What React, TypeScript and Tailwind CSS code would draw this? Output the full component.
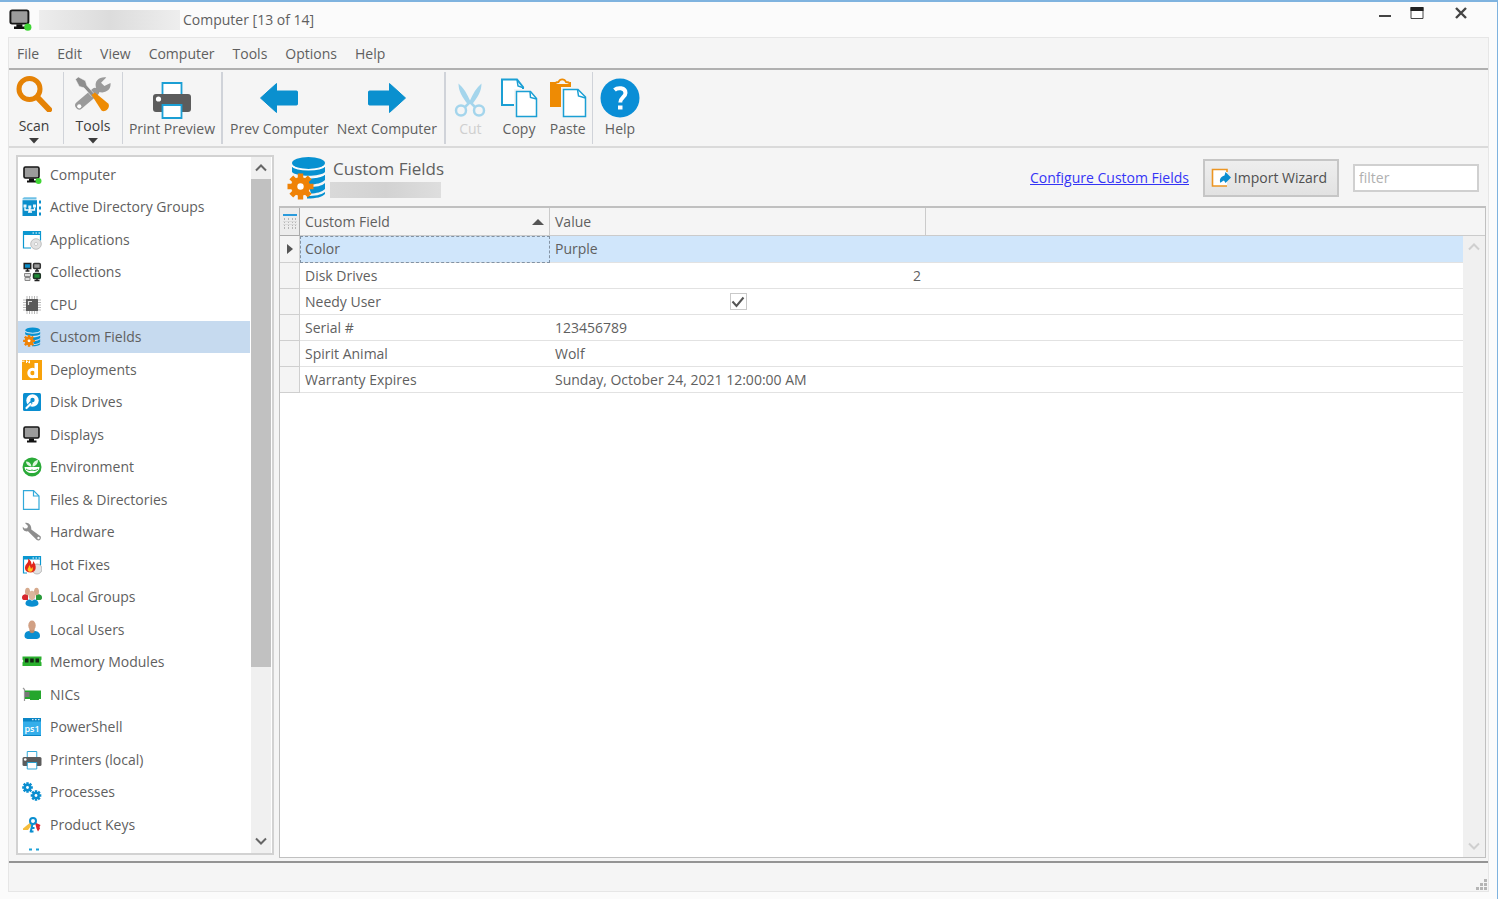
import React from 'react';

type IconProps = { className?: string };

const MonitorIcon = ({ className, online }: IconProps & { online?: boolean }) => (
  <svg viewBox="0 0 20 20" className={className} aria-hidden="true">
    <rect x="2" y="2" width="15" height="11" rx="1.5" fill="#9c9c9c" stroke="#161616" strokeWidth="1.6" />
    <path d="M7 13.5h5v2h2.5v2H5v-2h2z" fill="#111" />
    {online && <circle cx="16.5" cy="16" r="3" fill="#3fd534" />}
  </svg>
);

const DirectoryIcon = ({ className }: IconProps) => (
  <svg viewBox="0 0 20 20" className={className} aria-hidden="true">
    <path d="M.5 2.500V1.500L2 .3h12.500v2.200z" fill="#6fc1e6" />
    <rect x=".5" y="3.200" width="14.500" height="15.800" fill="#0a8ecb" />
    <path d="M1.500 7.500h3v3h-3zM6.300 8.500h3v3h-3zM11 7.500h3v3h-3z" fill="#e8f6fc" />
    <path d="M3 10.500v2.500h9.500v-2.500M7.800 11v4M6 15h4" fill="none" stroke="#fff" strokeWidth="1.300" />
    <path d="M17 3.500h2v3h-2zM17 9.500h2v3h-2zM17 15.500h2v3h-2z" fill="#0a8ecb" />
  </svg>
);

const ApplicationIcon = ({ className }: IconProps) => (
  <svg viewBox="0 0 20 20" className={className} aria-hidden="true">
    <path d="M1.500 1.500h17v9M1.500 1.500V18H9" fill="none" stroke="#0a97d0" strokeWidth="1.200" />
    <path d="M1 1h18v4H1z" fill="#0a97d0" />
    <path d="M10.500 3h1.500M13.500 3H15M16.500 3H18" stroke="#fff" strokeWidth="1" />
    <circle cx="14" cy="14" r="5.300" fill="#e2e2e2" stroke="#b3b3b3" strokeWidth=".8" />
    <circle cx="14" cy="14" r="1.600" fill="#fff" stroke="#bdbdbd" strokeWidth=".7" />
  </svg>
);

const CollectionsIcon = ({ className }: IconProps) => (
  <svg viewBox="0 0 20 20" className={className} aria-hidden="true">
    <rect x="2.200" y="1.500" width="6.500" height="5" fill="#0a8ecb" stroke="#222" strokeWidth="1.500" />
    <rect x="11.500" y="1.500" width="6.800" height="5" rx="1" fill="#999" stroke="#333" strokeWidth="1.500" />
    <path d="M3.500 9h4M5.500 7v2M13 9h4M15 7v2" stroke="#222" strokeWidth="1.600" />
    <path d="M2.500 11.500h6v3h-6zM3 15.500h5v3H3z" fill="#ddd" stroke="#888" />
    <rect x="11.500" y="11.500" width="6.800" height="5" rx="1" fill="#1e8a35" stroke="#1f3325" strokeWidth="1.500" />
    <path d="M12.500 18.500h5M15 16.500v2" stroke="#222" strokeWidth="1.500" />
  </svg>
);

const CpuIcon = ({ className }: IconProps) => (
  <svg viewBox="0 0 20 20" className={className} aria-hidden="true">
    <path d="M5 1v18M7.500 1v18M10 1v18M12.500 1v18M15 1v18M1 5h18M1 7.500h18M1 10h18M1 12.500h18M1 15h18" stroke="#b0b0b0" strokeWidth=".9" />
    <rect x="4" y="4" width="12" height="12" rx=".5" fill="#5a5a5a" />
    <path d="M6.500 10V6.500H10" fill="none" stroke="#ddd" strokeWidth="1.200" />
  </svg>
);

const DatabaseGearIcon = ({ className }: IconProps) => (
  <svg viewBox="0 0 40 44" className={className} aria-hidden="true">
    <ellipse cx="21.500" cy="7" rx="16.500" ry="6" fill="#0791d1" />
    <path d="M5 10c5 5 28 5 33 0v6c-5 5-28 5-33 0z" fill="#0791d1" />
    <path d="M12 21c9 2 21 1 26-3v6c-3 3-9 4.500-15 4.500zM22 31c7 0 13-1 16-4v6c-3 3-9 4.500-14 4.500zM20 40c8 0 14-1 18-4v2c-3 3-8 4.500-18 4.500z" fill="#0791d1" />
    <path d="M5 10c5 5 28 5 33 0" fill="none" stroke="#fff" strokeWidth="1.500" />
    <path d="M38 18c-5 4-17 5-26 3" fill="none" stroke="#fff" strokeWidth="1.200" />
    <g transform="translate(13.500 30.500)" fill="#ef8206">
      <circle r="9.500" />
      <path d="M-2.700-13h5.400v26h-5.400zM-13-2.700h26v5.400h-26z" />
      <path d="M-2.700-13h5.400v26h-5.400zM-13-2.700h26v5.400h-26z" transform="rotate(45)" />
      <circle r="3.200" fill="#fff" />
    </g>
  </svg>
);

const DeployIcon = ({ className }: IconProps) => (
  <svg viewBox="0 0 20 20" className={className} aria-hidden="true">
    <path d="M0 0h20v20H0z" fill="#f8a20a" />
    <path d="M0 1.200h2.500M4.500 3V.500M4.500.500L7.500 3V.500" stroke="#fff" strokeWidth="1" fill="none" />
    <circle cx="10.500" cy="13" r="3.700" fill="none" stroke="#fff" strokeWidth="3" />
    <path d="M12.500 3H16v15h-3.500z" fill="#fff" />
  </svg>
);

const DiskIcon = ({ className }: IconProps) => (
  <svg viewBox="0 0 20 20" className={className} aria-hidden="true">
    <rect x="1" y="1" width="18" height="18" rx="1.500" fill="#0a8ed0" />
    <circle cx="10.500" cy="8.500" r="6.200" fill="#fff" />
    <circle cx="10.500" cy="8" r="2.200" fill="#0a8ed0" />
    <path d="M9.500 10L5 15.500" stroke="#0a8ed0" strokeWidth="3" />
    <path d="M8.500 12l-4 4" stroke="#fff" strokeWidth="2.200" strokeLinecap="round" />
  </svg>
);

const EnvironmentIcon = ({ className }: IconProps) => (
  <svg viewBox="0 0 20 20" className={className} aria-hidden="true">
    <circle cx="10" cy="10" r="9.500" fill="#2aaa38" />
    <path d="M2.500 10h15c-.5 4-3.500 6-7.500 6s-7-2-7.500-6z" fill="#fff" />
    <path d="M9.500 9.500C5 9 4 6 4 4.500 7 4.500 9 6 9.500 9.500zM10.500 9.500C10.500 6 12.500 3.500 16 3c0 3-1.500 6-5.500 6.500z" fill="#dff5df" />
    <path d="M4 12c2 1.500 4 2 6 1 2 1 4 .5 6-1" stroke="#2aaa38" fill="none" strokeWidth="1" />
  </svg>
);

const FileIcon = ({ className }: IconProps) => (
  <svg viewBox="0 0 20 20" className={className} aria-hidden="true">
    <path d="M1.500.600h10L17 6v13.400H1.500z" fill="#fff" stroke="#31a9da" strokeWidth="1.200" />
    <path d="M11.500.600V6H17" fill="none" stroke="#31a9da" strokeWidth="1.200" />
  </svg>
);

const WrenchIcon = ({ className }: IconProps) => (
  <svg viewBox="0 0 20 20" className={className} aria-hidden="true">
    <path d="M3 1l3 3-.8 2.300L2.500 6.500.800 4.800C.3 8 3 10 6 9.300l8.500 8.500c2.200 2 5.500-.5 4-3.500L9.300 7.500C9.800 3.500 6.500 0 3 1z" fill="#8e8e8e" />
    <circle cx="16.500" cy="16" r="1.200" fill="#fff" />
  </svg>
);

const HotFixIcon = ({ className }: IconProps) => (
  <svg viewBox="0 0 20 20" className={className} aria-hidden="true">
    <path d="M1.500 1.500h17v9M1.500 1.500V18H5" fill="none" stroke="#0a97d0" strokeWidth="1.200" />
    <path d="M1 1h18v3.500H1z" fill="#0a97d0" />
    <path d="M10.500 3h1.500M13.500 3H15M16.500 3H18" stroke="#fff" />
    <circle cx="15" cy="14" r="5" fill="#e2e2e2" stroke="#aaa" strokeWidth=".8" />
    <path d="M6 3.500c3 2 3.500 4 3.500 6C11 9 11 8 11 6c4 4 4 11.500-2.500 11.500C2 17.500 2 11.500 4.500 9 6.500 7 6.500 5.500 6 3.500z" fill="#e1251b" />
    <path d="M7 10c2 2 1.500 3 2 4l1.500-2c1 3-.5 4.700-2 4.700C6 16.700 5 14.500 6 13.200c.7-1 1-1.800 1-3.200z" fill="#ffc423" />
  </svg>
);

const GroupIcon = ({ className }: IconProps) => (
  <svg viewBox="0 0 20 20" className={className} aria-hidden="true">
    <path d="M0 10.500C0 7.500 3 7 6 7v6H1.500C.5 12.500 0 12 0 10.500z" fill="#d7262d" />
    <path d="M20 10.500C20 7.500 17 7 14 7v6h4.500c1-.5 1.500-1 1.500-2.500z" fill="#2a9a3a" />
    <ellipse cx="5.500" cy="4.500" rx="2.500" ry="3.800" fill="#d6a98c" />
    <ellipse cx="14.500" cy="4.500" rx="2.500" ry="3.800" fill="#d6a98c" />
    <ellipse cx="10" cy="8.500" rx="3.500" ry="4.700" fill="#dcb69d" />
    <path d="M3.500 17c0-3.300 2-4.300 4.500-4.500 1 1.500 3 1.500 4 0 2.500.2 4.500 1.200 4.500 4.500-1 3.500-12 3.500-13 0z" fill="#0a8ed0" />
  </svg>
);

const UserIcon = ({ className }: IconProps) => (
  <svg viewBox="0 0 20 20" className={className} aria-hidden="true">
    <path d="M2.500 16c0-4 2.500-5 5.500-5h4c3 0 6 1 6 5 0 1.500-1 2.500-3 3H5.500c-2-.5-3-1.500-3-3z" fill="#0a8ed0" />
    <path d="M7.500 9h5v3c-1.500 1.500-3.500 1.500-5 0z" fill="#bd8a6c" />
    <ellipse cx="10" cy="5.500" rx="3.700" ry="5" fill="#d1a084" />
  </svg>
);

const MemoryIcon = ({ className }: IconProps) => (
  <svg viewBox="0 0 20 20" className={className} aria-hidden="true">
    <path d="M.500 4.500h19v3l-1 1.500 1 1.500v3.500H.5v-3.500l1-1.500-1-1.500z" fill="#2bb02f" />
    <path d="M3 6.500h3.500v4H3zM8.200 6.500h3.500v4H8.200zM13.500 6.500H17v4h-3.500z" fill="#142614" />
  </svg>
);

const NicIcon = ({ className }: IconProps) => (
  <svg viewBox="0 0 20 20" className={className} aria-hidden="true">
    <path d="M1 3l1.500 1.500V16" fill="none" stroke="#999" strokeWidth="1.200" />
    <path d="M3 5.500h16v8.500h-2v1H8v-1H3z" fill="#25a62d" />
    <path d="M3 7h4.500v5H3z" fill="#777" />
  </svg>
);

const PowerShellIcon = ({ className }: IconProps) => (
  <svg viewBox="0 0 20 20" className={className} aria-hidden="true">
    <path d="M1 1h18v18H1z" fill="#35aeea" />
    <path d="M1 1h18v3.500H1z" fill="#0b86c6" />
    <path d="M10 2.700h1.500M13 2.700h1.500M16 2.700h1.500" stroke="#fff" />
    <text x="10" y="14.500" textAnchor="middle" fontSize="9" fontFamily="Open Sans" fontWeight="600" fill="#fff">ps1</text>
    <path d="M1 18h18v1H1z" fill="#0b86c6" />
  </svg>
);

const PrinterIcon = ({ className }: IconProps) => (
  <svg viewBox="0 0 40 38" className={className} aria-hidden="true">
    <path d="M10.500 2h19v13h-19z" fill="#fff" stroke="#1b9fd4" strokeWidth="1.800" />
    <path d="M4 13h32a3 3 0 0 1 3 3v12a3 3 0 0 1-3 3H4a3 3 0 0 1-3-3V16a3 3 0 0 1 3-3z" fill="#5c5c5c" />
    <circle cx="6.500" cy="18" r="2.600" fill="#fff" />
    <path d="M10.500 24h19v13h-19z" fill="#fff" stroke="#1b9fd4" strokeWidth="1.800" />
  </svg>
);

const Gear = ({ x, y, s }: { x: number; y: number; s: number }) => (
  <g transform={`translate(${x} ${y}) scale(${s})`} fill="#0a8ed0">
    <circle r="4" />
    <path d="M-1.300-5.600h2.600v11.200h-2.600zM-5.600-1.300h11.200v2.600H-5.600z" />
    <path d="M-1.300-5.600h2.600v11.200h-2.600zM-5.600-1.300h11.200v2.600H-5.600z" transform="rotate(45)" />
    <circle r="1.500" fill="#fff" />
  </g>
);

const ProcessesIcon = ({ className }: IconProps) => (
  <svg viewBox="0 0 20 20" className={className} aria-hidden="true">
    <Gear x={5.5} y={5.5} s={0.95} />
    <Gear x={14} y={13.5} s={0.95} />
  </svg>
);

const KeysIcon = ({ className }: IconProps) => (
  <svg viewBox="0 0 20 20" className={className} aria-hidden="true">
    <path d="M9 7L1 13.500V15h5l3-4z" fill="#f5bd3d" />
    <path d="M12 7l6.500 3-1 2 .5 1.500-2 3-1.500-3-1-4z" fill="#d9242c" />
    <circle cx="11" cy="6" r="3" fill="none" stroke="#0a8ed0" strokeWidth="2" />
    <path d="M10.500 9L8.500 17.500M9.500 13h3M8.500 16.500h3" stroke="#0a8ed0" strokeWidth="2" />
  </svg>
);

const ProductsIcon = ({ className }: IconProps) => (
  <svg viewBox="0 0 20 20" className={className} aria-hidden="true">
    <path d="M7 2.500h3M14 2.500h3" stroke="#1ba1d8" strokeWidth="2" />
  </svg>
);

const SearchIcon = ({ className }: IconProps) => (
  <svg viewBox="0 0 36 36" className={className} aria-hidden="true">
    <circle cx="13.500" cy="13" r="10.500" fill="none" stroke="#e58205" strokeWidth="5" />
    <path d="M22 22l11 11.500" stroke="#e58205" strokeWidth="6" strokeLinecap="round" />
  </svg>
);

const ToolsIcon = ({ className }: IconProps) => (
  <svg viewBox="0 0 40 38" className={className} aria-hidden="true">
    <path d="M22 17L5.500 31" stroke="#9a9a9a" strokeWidth="8.500" strokeLinecap="round" />
    <path d="M20 19l7-6" stroke="#9a9a9a" strokeWidth="6" />
    <path d="M38.500 7.500l-6.500 3-3.500-3.500L34 1.500C27 .500 21.500 5 23 11.500c2 5 5 6.500 9 5.500 4.500-1 7-4.500 6.500-9.500z" fill="#9a9a9a" />
    <circle cx="5.500" cy="32" r="2.200" fill="#fff" />
    <path d="M1.500 3.500l3-2.500 7.500 4 1.500 5 8 9-3 2.500-8-9-5-1.500z" fill="#8e8e8e" stroke="#f5f5f5" strokeWidth=".6" />
    <path d="M18.500 20l3.500-2.500 14 11.500c3 4-3 10-7 7.500z" fill="#ee8b04" />
  </svg>
);

const ArrowIcon = ({ className }: IconProps) => (
  <svg viewBox="0 0 40 32" className={className} aria-hidden="true">
    <path d="M1.500 16L17.500 1.500v7.500H37.500a1 1 0 0 1 1 1v12a1 1 0 0 1-1 1h-20v7.500z" fill="#0a90cf" stroke="#0a90cf" strokeLinejoin="round" />
  </svg>
);

const CutIcon = ({ className }: IconProps) => (
  <svg viewBox="0 0 32 36" className={className} aria-hidden="true">
    <path d="M4.500 1.500c5 4 8.500 10 12 18l-2.500 3C8 15 4.500 9 4.500 1.500zM27.500 1.500c0 7.500-3.500 13.500-9.500 21l-2.500-3c3.500-8 7-14 12-18z" fill="#a4d5ec" />
    <circle cx="7" cy="28.500" r="5" fill="none" stroke="#a4d5ec" strokeWidth="2.500" />
    <circle cx="25" cy="28.500" r="5" fill="none" stroke="#a4d5ec" strokeWidth="2.500" />
    <path d="M11 25l5-5 5 5" fill="none" stroke="#a4d5ec" strokeWidth="2.500" />
  </svg>
);

const CopyIcon = ({ className }: IconProps) => (
  <svg viewBox="0 0 38 40" className={className} aria-hidden="true">
    <path d="M2 1.500h15l6 7.500v18H2z" fill="#fff" stroke="#1b9fd4" strokeWidth="2" />
    <path d="M17 1.500l1 6.500 6 2" fill="none" stroke="#1b9fd4" strokeWidth="1.500" />
    <path d="M14 11h24v29H14z" fill="#f5f5f5" />
    <path d="M16.500 13.500h14l6 7V38.500h-20z" fill="#fff" stroke="#1b9fd4" strokeWidth="1.500" />
    <path d="M30 13.500l.5 6 6 1.500" fill="none" stroke="#1b9fd4" strokeWidth="1.500" />
  </svg>
);

const PasteIcon = ({ className }: IconProps) => (
  <svg viewBox="0 0 38 40" className={className} aria-hidden="true">
    <path d="M1 4h6v3h14V4h1v5H12v20H1z" fill="#ee8b04" />
    <path d="M6 7c0-2.500 2-3 3.500-3 1.500-3.500 6-3.500 7.500 0 1.500 0 4 .5 4 3z" fill="#f5f5f5" stroke="#ee8b04" strokeWidth="1.800" />
    <path d="M14.500 11.500h14.500l7.500 7.500v19.500h-22z" fill="#fff" stroke="#1b9fd4" strokeWidth="1.500" />
    <path d="M28.500 11.500l1 6.500 7 2" fill="none" stroke="#1b9fd4" strokeWidth="1.500" />
  </svg>
);

const HelpIcon = ({ className }: IconProps) => (
  <svg viewBox="0 0 40 40" className={className} aria-hidden="true">
    <circle cx="20" cy="20" r="19.500" fill="#0a8ed6" />
    <path d="M14.500 12c3-2.700 11-2.700 11 3 0 4-5.200 4.500-5.200 9.500" fill="none" stroke="#fff" strokeWidth="4" />
    <path d="M18 27.500h4.500v4H18z" fill="#fff" />
  </svg>
);

const ImportIcon = ({ className }: IconProps) => (
  <svg viewBox="0 0 20 20" className={className} aria-hidden="true">
    <path d="M16 4V1.500H1.500v16.500H16" fill="#fff" stroke="#ec9522" strokeWidth="1.600" />
    <path d="M14.500 4l5.500 5.500-5.500 5.500-1.500-2.500c-1.500.7-3 1.500-3.500 2.500-1.500-3 0-6.500 4-7.500z" fill="#0a8ed0" />
  </svg>
);

const ChevronIcon = ({ className }: IconProps) => (
  <svg viewBox="0 0 12 8" className={className} aria-hidden="true">
    <path d="M1 6.500L6 1.500l5 5" fill="none" stroke="currentColor" strokeWidth="2" />
  </svg>
);

const sections = [
  { name: 'Computer', icon: <MonitorIcon online className="size-5" /> },
  { name: 'Active Directory Groups', icon: <DirectoryIcon className="size-5" /> },
  { name: 'Applications', icon: <ApplicationIcon className="size-5" /> },
  { name: 'Collections', icon: <CollectionsIcon className="size-5" /> },
  { name: 'CPU', icon: <CpuIcon className="size-5" /> },
  { name: 'Custom Fields', icon: <DatabaseGearIcon className="size-5" /> },
  { name: 'Deployments', icon: <DeployIcon className="size-5" /> },
  { name: 'Disk Drives', icon: <DiskIcon className="size-5" /> },
  { name: 'Displays', icon: <MonitorIcon className="size-5" /> },
  { name: 'Environment', icon: <EnvironmentIcon className="size-5" /> },
  { name: 'Files & Directories', icon: <FileIcon className="size-5" /> },
  { name: 'Hardware', icon: <WrenchIcon className="size-5" /> },
  { name: 'Hot Fixes', icon: <HotFixIcon className="size-5" /> },
  { name: 'Local Groups', icon: <GroupIcon className="size-5" /> },
  { name: 'Local Users', icon: <UserIcon className="size-5" /> },
  { name: 'Memory Modules', icon: <MemoryIcon className="size-5" /> },
  { name: 'NICs', icon: <NicIcon className="size-5" /> },
  { name: 'PowerShell', icon: <PowerShellIcon className="size-5" /> },
  { name: 'Printers (local)', icon: <PrinterIcon className="size-5" /> },
  { name: 'Processes', icon: <ProcessesIcon className="size-5" /> },
  { name: 'Product Keys', icon: <KeysIcon className="size-5" /> },
  { name: '', icon: <ProductsIcon className="size-5" /> },
];

const fields = [
  { name: 'Color', value: 'Purple' },
  { name: 'Disk Drives', value: 2 },
  { name: 'Needy User', value: true },
  { name: 'Serial #', value: '123456789' },
  { name: 'Spirit Animal', value: 'Wolf' },
  { name: 'Warranty Expires', value: 'Sunday, October 24, 2021 12:00:00 AM' },
];

const menus = ['File', 'Edit', 'View', 'Computer', 'Tools', 'Options', 'Help'];

function ToolButton({ label, icon, dropdown, disabled }: { label: string; icon: React.ReactNode; dropdown?: boolean; disabled?: boolean }) {
  return (
    <button
      type="button"
      disabled={disabled}
      className={`flex flex-col items-center px-1 whitespace-nowrap disabled:text-[#cfcfcf] ${dropdown ? 'text-[#3c3c3c]' : ''}`}
    >
      <span className={`flex items-center justify-center ${dropdown ? 'h-12' : 'h-[51px]'}`}>{icon}</span>
      <span className="leading-4">{label}</span>
      {dropdown && (
        <svg viewBox="0 0 10 6" className="mt-1 h-[6px] w-[10px]" aria-hidden="true">
          <path d="M0 0h10L5 5.500z" fill="#3c3c3c" />
        </svg>
      )}
    </button>
  );
}

function Separator({ wide }: { wide?: boolean }) {
  return <div className={`my-[2px] bg-[#d0d3d9] ${wide ? 'w-[2px]' : 'w-px'}`}></div>;
}

function FieldValue({ name, value }: { name: string; value: string | number | boolean }) {
  if (typeof value === 'boolean') {
    return (
      <div className="grid place-items-center">
        <input
          type="checkbox"
          checked={value}
          readOnly
          aria-label={name}
          className="col-start-1 row-start-1 size-[17px] appearance-none border border-[#c9c9c9] bg-white"
        />
        <svg viewBox="0 0 16 16" className="pointer-events-none col-start-1 row-start-1 size-4" aria-hidden="true">
          <path d="M2.500 7.500l4 4.500L13.500 3.500" fill="none" stroke="#555" strokeWidth="2" />
        </svg>
      </div>
    );
  }
  return <div className={typeof value === 'number' ? 'text-right' : ''}>{value}</div>;
}

export default function App() {
  return (
    <div className="flex h-screen flex-col border-t-2 border-r border-[#7fb3df] bg-[#fbfbfb] pr-2 pb-[7px] pl-2 font-['Open_Sans','Noto_Sans',sans-serif] text-sm text-[#5f5f5f]">
      {/* Title bar */}
      <header className="flex h-[35px] shrink-0 items-center">
        <MonitorIcon online className="size-6" />
        <div className="ml-[7px] h-5 w-[141px] bg-gradient-to-r from-[#ededed] via-[#dcdcdc] to-[#eeeeee]"></div>
        <h1 className="ml-[3px]">Computer [13 of 14]</h1>
        <div className="ml-auto flex items-center self-start pr-4 text-[#444]">
          <button type="button" aria-label="Minimize" className="flex size-6 items-center justify-center">
            <svg viewBox="0 0 14 14" className="size-[14px]" aria-hidden="true">
              <path d="M1 9h12" stroke="currentColor" strokeWidth="2" />
            </svg>
          </button>
          <button type="button" aria-label="Maximize" className="ml-2 flex size-6 items-center justify-center">
            <svg viewBox="0 0 14 14" className="size-[14px]" aria-hidden="true">
              <path d="M1 .500h12v11H1z" fill="#fff" stroke="currentColor" />
              <path d="M.500 0h13v4H.5z" fill="#222" />
            </svg>
          </button>
          <button type="button" aria-label="Close" className="ml-5 flex size-6 items-center justify-center">
            <svg viewBox="0 0 14 14" className="size-[14px]" aria-hidden="true">
              <path d="M2 1l10 10M12 1L2 11" stroke="currentColor" strokeWidth="2.400" />
            </svg>
          </button>
        </div>
      </header>

      <div className="flex min-h-0 flex-1 flex-col border border-[#e6e6e6] bg-[#f5f5f5]">
        {/* Menu */}
        <nav className="flex h-8 shrink-0 items-center gap-[18px] border-b-2 border-[#b0b0b0] pt-px pl-2">
          {menus.map((menu) => (
            <button key={menu} type="button">{menu}</button>
          ))}
        </nav>

        {/* Toolbar */}
        <div className="flex h-[78px] shrink-0 border-b-2 border-[#dadada]">
          <div className="flex w-[54px] pl-[3px]">
            <ToolButton dropdown label="Scan" icon={<SearchIcon className="size-9" />} />
          </div>
          <Separator />
          <div className="flex w-[58px] justify-center">
            <ToolButton dropdown label="Tools" icon={<ToolsIcon className="h-9 w-10" />} />
          </div>
          <Separator />
          <div className="flex w-[98px] justify-center">
            <ToolButton label="Print Preview" icon={<PrinterIcon className="mt-2 h-[38px] w-10" />} />
          </div>
          <Separator wide />
          <div className="flex w-[221px] justify-center">
            <ToolButton label="Prev Computer" icon={<ArrowIcon className="mt-1 h-8 w-10" />} />
            <ToolButton label="Next Computer" icon={<ArrowIcon className="mt-1 h-8 w-10 rotate-180" />} />
          </div>
          <Separator wide />
          <div className="grid w-[146px] grid-cols-3">
            <ToolButton disabled label="Cut" icon={<CutIcon className="mt-2 h-9 w-8" />} />
            <ToolButton label="Copy" icon={<CopyIcon className="mt-1 h-10 w-[38px]" />} />
            <ToolButton label="Paste" icon={<PasteIcon className="mt-1 h-10 w-[38px]" />} />
          </div>
          <Separator />
          <div className="flex w-[54px] justify-center">
            <ToolButton label="Help" icon={<HelpIcon className="mt-1 size-10" />} />
          </div>
        </div>

        <div className="flex min-h-0 flex-1 border-b-2 border-[#949494] pr-[2px] pb-[3px] pl-[7px]">
          {/* Sidebar */}
          <aside className="mt-[7px] mb-[3px] flex w-[258px] shrink-0 border-2 border-[#d2d2d2] bg-white pr-px">
            <ul className="min-h-0 flex-1 overflow-hidden pt-[2px]">
              {sections.map((section, index) => (
                <li key={index} className="odd:h-8 even:h-[33px]">
                  <a
                    href="#"
                    aria-current={section.name === 'Custom Fields' ? 'page' : undefined}
                    className="mr-px flex h-8 items-center gap-2 pl-1 aria-[current=page]:bg-[#c6daef]"
                  >
                    {section.icon}
                    <span>{section.name}</span>
                  </a>
                </li>
              ))}
            </ul>
            <div className="flex w-5 shrink-0 flex-col bg-[#f0f0f0] text-[#666]">
              <div className="flex h-[22px] shrink-0 items-center justify-center">
                <ChevronIcon className="h-2 w-3" />
              </div>
              <div className="min-h-0 flex-1">
                <div className="h-3/4 bg-[#c1c1c1]"></div>
              </div>
              <div className="flex h-6 shrink-0 items-center justify-center">
                <ChevronIcon className="h-2 w-3 rotate-180" />
              </div>
            </div>
          </aside>

          {/* Custom fields */}
          <main className="ml-[5px] flex min-w-0 flex-1 flex-col">
            <div className="flex h-[58px] shrink-0 items-center pt-px pr-[7px] pl-2">
              <DatabaseGearIcon className="h-11 w-10" />
              <div className="ml-[3px]">
                <h2 className="ml-[3px] text-[17px] leading-6">Custom Fields</h2>
                <div className="mt-px h-4 w-[111px] bg-gradient-to-r from-[#d9d9d9] via-[#d2d2d2] to-[#dedede]"></div>
              </div>
              <a href="#" className="ml-auto pt-px text-[#3434f5] underline">Configure Custom Fields</a>
              <button
                type="button"
                className="ml-[14px] flex h-[38px] w-[136px] items-center justify-center gap-[3px] border-2 border-[#c6c6c6] bg-gradient-to-b from-[#eeeeee] to-[#e2e2e2] pr-1 whitespace-nowrap text-[#505050]"
              >
                <ImportIcon className="size-5" />
                Import Wizard
              </button>
              <input
                type="text"
                placeholder="filter"
                aria-label="filter"
                className="ml-[14px] h-7 w-[126px] border-2 border-[#d0d0d0] bg-white px-1 placeholder:text-[#b0b0b0]"
              />
            </div>

            <div className="flex min-h-0 flex-1 border border-t-2 border-[#c0c0c0] bg-white">
              <div className="min-w-0 flex-1">
                <table className="w-full table-fixed border-separate border-spacing-0 text-left">
                  <colgroup>
                    <col className="w-5" />
                    <col className="w-[250px]" />
                    <col className="w-[376px]" />
                    <col />
                  </colgroup>
                  <thead>
                    <tr className="h-7 bg-[#f5f5f5]">
                      <th className="border-r border-b border-[#aaa] bg-[#ececec] p-0" aria-label="Columns">
                        <svg viewBox="0 0 14 15" className="mx-auto h-[15px] w-[14px]" aria-hidden="true">
                          <path d="M0 1h14" stroke="#2a9bdc" strokeWidth="2" />
                          <path d="M1.500 4v11M5.500 4v11M9.500 4v11M12.500 4v11" stroke="#b5b5b5" strokeDasharray="2 1" />
                          <path d="M0 7.500h14M0 10.500h14" stroke="#dadada" />
                        </svg>
                      </th>
                      <th className="border-r border-b border-[#cbcbcb] px-[5px] py-0 font-normal" aria-sort="ascending">
                        <div className="flex items-center justify-between">
                          Custom Field
                          <svg viewBox="0 0 12 6" className="h-[6px] w-3" aria-hidden="true">
                            <path d="M0 6L6 0l6 6z" fill="#555" />
                          </svg>
                        </div>
                      </th>
                      <th className="border-r border-b border-[#cbcbcb] px-[5px] py-0 font-normal">Value</th>
                      <th className="border-b border-[#cbcbcb] p-0"></th>
                    </tr>
                  </thead>
                  <tbody>
                    {fields.map((field, index) => (
                      <tr key={field.name} className={index === 0 ? 'h-[27px] bg-[#d0e6fb]' : 'h-[26px]'}>
                        <td className="border-r border-b border-[#cfcfcf] bg-[#f4f4f4] p-0">
                          {index === 0 && (
                            <svg viewBox="0 0 6 10" className="mx-auto h-[10px] w-[6px]" aria-hidden="true">
                              <path d="M0 0l6 5-6 5z" fill="#555" />
                            </svg>
                          )}
                        </td>
                        <td className={`border-b border-[#e2e2e2] px-[5px] py-0 ${index === 0 ? 'outline-1 -outline-offset-1 outline-dashed outline-[#8292a3]' : ''}`}>
                          {field.name}
                        </td>
                        <td className="border-b border-[#e2e2e2] px-[5px] py-0">
                          <FieldValue name={field.name} value={field.value} />
                        </td>
                        <td className="border-b border-[#e2e2e2] p-0"></td>
                      </tr>
                    ))}
                  </tbody>
                </table>
              </div>
              <div className="flex w-[22px] shrink-0 flex-col bg-[#f0f0f0] text-[#cfcfcf]">
                <div className="h-7 border-b border-[#cbcbcb] bg-[#f5f5f5]"></div>
                <div className="flex flex-1 flex-col items-center justify-between py-[7px]">
                  <ChevronIcon className="h-2 w-3" />
                  <ChevronIcon className="h-2 w-3 rotate-180" />
                </div>
              </div>
            </div>
          </main>
        </div>

        {/* Status bar */}
        <footer className="flex h-7 shrink-0 items-end justify-end">
          <svg viewBox="0 0 12 12" className="size-3" aria-hidden="true">
            <path d="M8 0h3v3H8zM4 4h3v3H4zM8 4h3v3H8zM0 8h3v3H0zM4 8h3v3H4zM8 8h3v3H8z" fill="#b5b5b5" />
          </svg>
        </footer>
      </div>
    </div>
  );
}
